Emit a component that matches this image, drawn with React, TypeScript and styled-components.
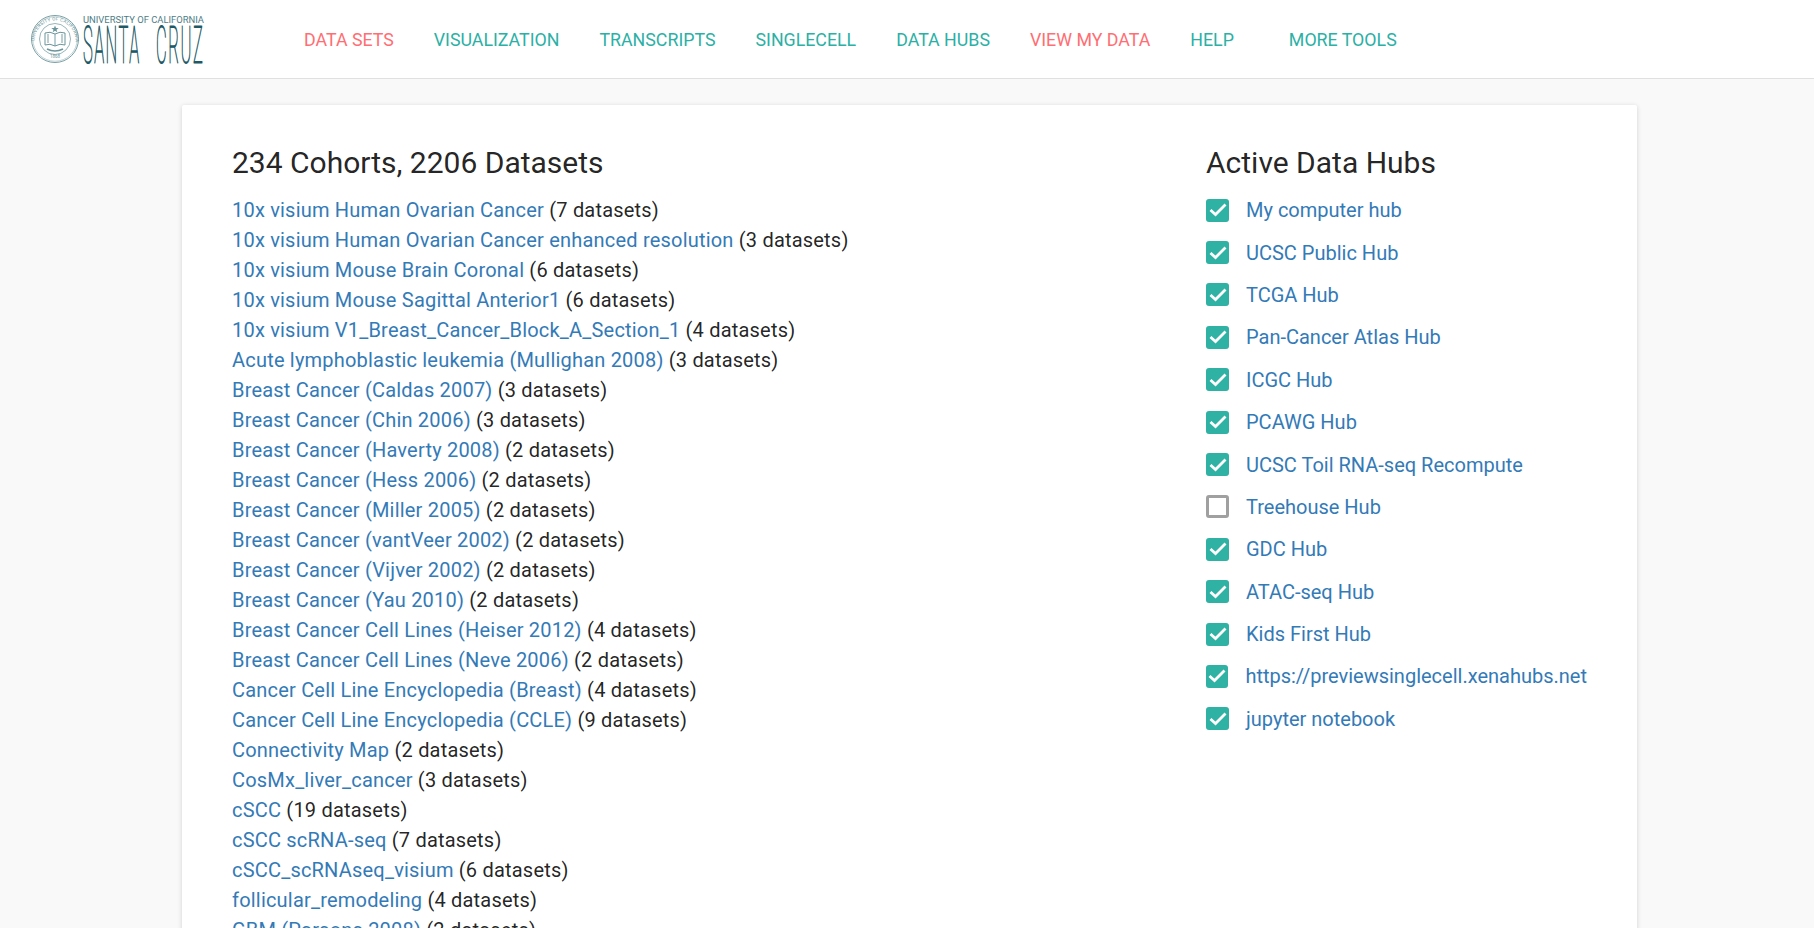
import React from "react";
import styled, { createGlobalStyle } from "styled-components";

const cohorts: [string, number][] = [
  ["10x visium Human Ovarian Cancer", 7],
  ["10x visium Human Ovarian Cancer enhanced resolution", 3],
  ["10x visium Mouse Brain Coronal", 6],
  ["10x visium Mouse Sagittal Anterior1", 6],
  ["10x visium V1_Breast_Cancer_Block_A_Section_1", 4],
  ["Acute lymphoblastic leukemia (Mullighan 2008)", 3],
  ["Breast Cancer (Caldas 2007)", 3],
  ["Breast Cancer (Chin 2006)", 3],
  ["Breast Cancer (Haverty 2008)", 2],
  ["Breast Cancer (Hess 2006)", 2],
  ["Breast Cancer (Miller 2005)", 2],
  ["Breast Cancer (vantVeer 2002)", 2],
  ["Breast Cancer (Vijver 2002)", 2],
  ["Breast Cancer (Yau 2010)", 2],
  ["Breast Cancer Cell Lines (Heiser 2012)", 4],
  ["Breast Cancer Cell Lines (Neve 2006)", 2],
  ["Cancer Cell Line Encyclopedia (Breast)", 4],
  ["Cancer Cell Line Encyclopedia (CCLE)", 9],
  ["Connectivity Map", 2],
  ["CosMx_liver_cancer", 3],
  ["cSCC", 19],
  ["cSCC scRNA-seq", 7],
  ["cSCC_scRNAseq_visium", 6],
  ["follicular_remodeling", 4],
  ["GBM (Parsons 2008)", 2],
];

const hubs: [string, boolean][] = [
  ["My computer hub", true],
  ["UCSC Public Hub", true],
  ["TCGA Hub", true],
  ["Pan-Cancer Atlas Hub", true],
  ["ICGC Hub", true],
  ["PCAWG Hub", true],
  ["UCSC Toil RNA-seq Recompute", true],
  ["Treehouse Hub", false],
  ["GDC Hub", true],
  ["ATAC-seq Hub", true],
  ["Kids First Hub", true],
  ["https://previewsinglecell.xenahubs.net", true],
  ["jupyter notebook", true],
];

const navItems = [
  { label: "DATA SETS", active: true, gap: 40 },
  { label: "VISUALIZATION", gap: 40 },
  { label: "TRANSCRIPTS", gap: 40 },
  { label: "SINGLECELL", gap: 40 },
  { label: "DATA HUBS", gap: 40 },
  { label: "VIEW MY DATA", active: true, gap: 40 },
  { label: "HELP", gap: 55 },
  { label: "MORE TOOLS", gap: 0 },
];

const Logo = () => (
  <svg width="176" height="50" viewBox="0 0 176 50" role="img" aria-label="UC Santa Cruz">
    <defs>
      <path id="seal-top" d="M4.5 27 A20.5 20.5 0 0 1 45.5 27" />
    </defs>
    <g fill="none" stroke="#6a959b">
      <circle cx="25" cy="25" r="23.5" strokeWidth="0.9" />
      <circle cx="25" cy="25" r="22.2" strokeWidth="0.4" />
      <circle cx="25" cy="25" r="15.5" strokeWidth="0.7" />
      <path d="M15 19 Q20 17 25 20 Q30 17 35 19 V31 Q30 29 25 32 Q20 29 15 31 Z" strokeWidth="1" />
      <path d="M25 20 V32 M18 20 V29 M32 20 V29" strokeWidth="0.9" />
      <path d="M17 35 Q25 39 33 35" strokeWidth="1.6" />
    </g>
    <path d="M25 11.5 l1 2.6 h2.7 l-2.2 1.6 0.8 2.6 -2.3 -1.6 -2.3 1.6 0.8 -2.6 -2.2 -1.6 h2.7 z" fill="#6a959b" />
    <SealText>
      <textPath href="#seal-top">UNIVERSITY OF CALIFORNIA</textPath>
    </SealText>
    <SealYear x="25" y="44">1868</SealYear>
    <LogoSmall x="53" y="9" textLength="121" lengthAdjust="spacingAndGlyphs">
      UNIVERSITY OF CALIFORNIA
    </LogoSmall>
    <g transform="translate(53 48.6) scale(1 3.13)">
      <LogoBig x="0" y="0">SANTA CRUZ</LogoBig>
    </g>
  </svg>
);

const Check = () => (
  <svg width="18" height="14" viewBox="0 0 18 14">
    <path d="M1.5 7 L6.5 11.5 L16.5 1.5" fill="none" stroke="#fff" strokeWidth="2.8" />
  </svg>
);

export default function App() {
  return (
    <>
      <GlobalStyle />
      <Header>
        <LogoLink>
          <Logo />
        </LogoLink>
        <Nav>
          {navItems.map((item) => (
            <NavLink key={item.label} $active={item.active} $gap={item.gap}>
              {item.label}
            </NavLink>
          ))}
        </Nav>
      </Header>
      <Card>
        <CohortColumn>
          <Title>234 Cohorts, 2206 Datasets</Title>
          <CohortList>
            {cohorts.map(([name, count]) => (
              <CohortRow key={name}>
                <TextLink>{name}</TextLink> ({count} datasets)
              </CohortRow>
            ))}
          </CohortList>
        </CohortColumn>
        <HubColumn>
          <Title>Active Data Hubs</Title>
          <HubList>
            {hubs.map(([name, checked]) => (
              <HubRow key={name}>
                <CheckBox $checked={checked}>{checked && <Check />}</CheckBox>
                <TextLink>{name}</TextLink>
              </HubRow>
            ))}
          </HubList>
        </HubColumn>
      </Card>
    </>
  );
}

const GlobalStyle = createGlobalStyle`
  html, body {
    margin: 0;
    height: 100%;
    overflow: hidden;
    background: #f9f9f9;
    font-family: Roboto, "Liberation Sans", sans-serif;
    color: rgba(0, 0, 0, 0.87);
  }
`;

const Header = styled.header`
  display: flex;
  align-items: center;
  height: 78px;
  background: #fff;
  border-bottom: 1px solid #e0e0e0;
`;

const LogoLink = styled.a`
  display: flex;
  margin-left: 30px;
  width: 274px;
`;

const SealText = styled.text`
  font-family: Roboto, sans-serif;
  font-size: 4.6px;
  letter-spacing: 0.25px;
  fill: #6a959b;
`;

const SealYear = styled.text`
  font-family: Roboto, sans-serif;
  font-size: 4.5px;
  text-anchor: middle;
  fill: #6a959b;
`;

const LogoSmall = styled.text`
  font-family: Roboto, sans-serif;
  font-size: 9px;
  fill: #4d7d86;
`;

const LogoBig = styled.text`
  font-family: Roboto, sans-serif;
  font-size: 16.5px;
  font-weight: 100;
  letter-spacing: 1.5px;
  word-spacing: 10px;
  fill: #1d5a66;
  stroke: #1d5a66;
  stroke-width: 0.8px;
  vector-effect: non-scaling-stroke;
`;

const Nav = styled.nav`
  display: flex;
  align-items: center;
`;

const NavLink = styled.a<{ $active?: boolean; $gap: number }>`
  font-size: 17.8px;
  color: ${(p) => (p.$active ? "#ff6e73" : "#2bb0a5")};
  margin-right: ${(p) => p.$gap}px;
`;

const Card = styled.main`
  display: flex;
  justify-content: space-between;
  width: 1455px;
  margin: 26px 0 0 182px;
  padding: 40px 50px;
  box-sizing: border-box;
  background: #fff;
  border-radius: 2px;
  box-shadow: 0 1px 5px rgba(0, 0, 0, 0.16);
`;

const CohortColumn = styled.section`
  flex: 1;
`;

const HubColumn = styled.section`
  width: 381px;
`;

const Title = styled.h2`
  margin: 0;
  font-size: 30px;
  font-weight: 400;
  line-height: 36px;
`;

const CohortList = styled.div`
  padding-top: 14px;
`;

const HubList = styled.div`
  padding-top: 8px;
`;

const CohortRow = styled.div`
  font-size: 20px;
  letter-spacing: 0.2px;
  line-height: 30px;
`;

const TextLink = styled.a`
  color: #337ab7;
`;

const HubRow = styled.label`
  display: flex;
  align-items: center;
  height: 42.4px;
  font-size: 20px;
`;

const CheckBox = styled.span<{ $checked: boolean }>`
  display: flex;
  align-items: center;
  justify-content: center;
  box-sizing: border-box;
  width: 23px;
  height: 23px;
  margin-right: 17px;
  border-radius: 3px;
  background: ${(p) => (p.$checked ? "#2fb1a4" : "#fff")};
  border: ${(p) => (p.$checked ? "none" : "3px solid #a0a0a0")};
`;
